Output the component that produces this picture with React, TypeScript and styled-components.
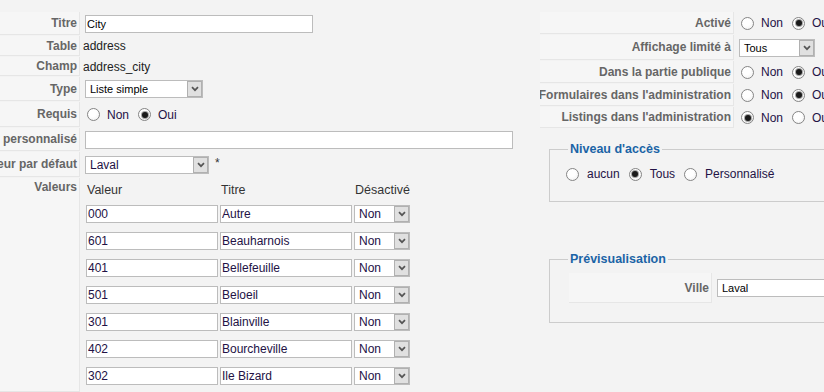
import * as React from 'react'
import styled, { createGlobalStyle } from 'styled-components'

const GlobalStyle = createGlobalStyle`
  html, body {
    margin: 0;
    padding: 0;
    background: #f3f3f3;
    overflow: hidden;
  }
  body {
    font-family: "Liberation Sans", Arial, sans-serif;
    font-size: 12px;
    color: #333;
  }
`

const Page = styled.div`
  display: flex;
  width: 824px;
  height: 392px;
  padding-top: 12px;
  box-sizing: border-box;
  overflow: hidden;
`

const LeftCol = styled.div`
  flex: 0 0 540px;
  display: flex;
  flex-direction: column;
`

const RightCol = styled.div`
  flex: 0 0 340px;
  display: flex;
  flex-direction: column;
`

const FormTable = styled.div<{ $key: number; $grow?: boolean }>`
  --key: ${p => p.$key}px;
  display: flex;
  flex-direction: column;
  gap: 1px;
  flex: ${p => (p.$grow ? '1' : 'none')};
`

const Row = styled.div<{ $h?: number; $grow?: boolean }>`
  display: grid;
  grid-template-columns: var(--key) 1fr;
  height: ${p => (p.$h ? `${p.$h}px` : 'auto')};
  flex: ${p => (p.$grow ? '1' : 'none')};
`

const Key = styled.div<{ $top?: boolean }>`
  display: flex;
  justify-content: flex-end;
  align-items: ${p => (p.$top ? 'flex-start' : 'center')};
  box-sizing: border-box;
  padding: ${p => (p.$top ? '2px' : '0')} 2px 0 0;
  overflow: hidden;
  white-space: nowrap;
  background: #f6f6f6;
  border-right: 1px solid #e6e6e6;
  border-bottom: 1px solid #e6e6e6;
  color: #666;
  font-weight: bold;
  font-size: 12px;
  line-height: 14px;
`

const Val = styled.div<{ $column?: boolean }>`
  display: flex;
  flex-direction: ${p => (p.$column ? 'column' : 'row')};
  align-items: ${p => (p.$column ? 'flex-start' : 'center')};
  gap: ${p => (p.$column ? 0 : 6)}px;
  padding: ${p => (p.$column ? '2px 0 0 6px' : '0 0 0 3px')};
  color: #222;
  font-size: 12px;
  white-space: nowrap;
  overflow: hidden;
`

const TextInput = styled.input<{ $w: number; $fs?: number; $ml?: number }>`
  box-sizing: border-box;
  width: ${p => p.$w}px;
  height: 18px;
  margin: 0 0 0 ${p => (p.$ml ?? 2)}px;
  padding: 0 1px;
  border: 1px solid #bcbcbc;
  background: #fff;
  font-family: "Liberation Sans", Arial, sans-serif;
  font-size: ${p => p.$fs ?? 11}px;
  color: ${p => (p.$fs && p.$fs > 11 ? '#231245' : '#000')};
  outline: none;
`

const SelectBox = styled.div<{ $w: number; $ml?: number }>`
  display: inline-flex;
  align-items: stretch;
  box-sizing: border-box;
  flex: none;
  width: ${p => p.$w}px;
  height: 18px;
  margin-left: ${p => (p.$ml ?? 2)}px;
  border: 1px solid #bcbcbc;
  background: #fff;
`

const SelectText = styled.span<{ $fs: number }>`
  flex: 1;
  padding-left: 4px;
  font-size: ${p => p.$fs}px;
  line-height: 16px;
  color: ${p => (p.$fs > 11 ? '#231245' : '#000')};
  overflow: hidden;
`

const SelectBtn = styled.span`
  display: flex;
  align-items: center;
  justify-content: center;
  box-sizing: border-box;
  width: 15px;
  background: #e0e0e0;
  border: 1px solid #b0b0b0;
`

const Star = styled.span`
  color: #333;
  font-size: 12px;
  margin-top: -4px;
`

const RadioGroup = styled.div<{ $gap?: number }>`
  display: flex;
  align-items: center;
  padding-left: 4px;
  gap: 9px;

  & > label {
    gap: ${p => p.$gap ?? 7}px;
  }
`

const RadioOption = styled.label`
  display: flex;
  align-items: center;
  color: #231245;
  font-size: 12px;
`

const RadioCircle = styled.span<{ $on?: boolean }>`
  display: inline-flex;
  align-items: center;
  justify-content: center;
  box-sizing: border-box;
  width: 13px;
  height: 13px;
  border-radius: 50%;
  border: 1px solid #858585;
  background: radial-gradient(circle at 40% 35%, #ffffff 40%, #ececec 100%);

  &::after {
    content: '';
    display: ${p => (p.$on ? 'block' : 'none')};
    width: 6px;
    height: 6px;
    border-radius: 50%;
    background: #1a1a1a;
    box-shadow: 0 0 0 1px #a5a5a5;
  }
`

const Cols = styled.div`
  display: grid;
  grid-template-columns: 132px 132px 56px;
  column-gap: 2px;
`

const HeadRow = styled(Cols)`
  height: 20px;
  align-items: center;
  margin-bottom: 5px;
  color: #333;
  font-size: 12.5px;

  & > span {
    padding-left: 1px;
  }
`

const ValueRows = styled(Cols)`
  row-gap: 9px;

  & ${TextInput}, & ${SelectBox} {
    margin-left: 0;
  }
`

const Fieldset = styled.fieldset<{ $mt: number; $pb: number }>`
  margin: ${p => p.$mt}px 0 0 9px;
  padding: 0 12px ${p => p.$pb}px;
  border: 1px solid #cccccc;
  min-width: 0;
`

const Legend = styled.legend`
  margin-left: 6px;
  padding: 0 2px;
  color: #1b64a6;
  font-weight: bold;
  font-size: 12.5px;
  line-height: 14px;
`

const FieldsetRadios = styled.div`
  height: 16px;
  margin-top: 10px;
  display: flex;
  align-items: center;
`

const PreviewTable = styled(FormTable)`
  margin: 7px 0 0 7px;
`

const Chevron = () => (
  <svg width="8" height="6" viewBox="0 0 8 6">
    <path d="M1 1.2 L4 4.2 L7 1.2" fill="none" stroke="#555" strokeWidth="1.7" />
  </svg>
)

type SelectProps = { w: number; value: string; fs?: number; ml?: number }

const Select: React.FC<SelectProps> = ({ w, value, fs = 11, ml }) => (
  <SelectBox $w={w} $ml={ml}>
    <SelectText $fs={fs}>{value}</SelectText>
    <SelectBtn>
      <Chevron />
    </SelectBtn>
  </SelectBox>
)

type RadiosProps = { options: string[]; checked: number; gap?: number }

const Radios: React.FC<RadiosProps> = ({ options, checked, gap }) => (
  <RadioGroup $gap={gap}>
    {options.map((o, i) => (
      <RadioOption key={o}>
        <RadioCircle $on={i === checked} />
        {o}
      </RadioOption>
    ))}
  </RadioGroup>
)

const values = [
  ['000', 'Autre'],
  ['601', 'Beauharnois'],
  ['401', 'Bellefeuille'],
  ['501', 'Beloeil'],
  ['301', 'Blainville'],
  ['402', 'Bourcheville'],
  ['302', 'Ile Bizard'],
]

export default function App() {
  return (
    <>
      <GlobalStyle />
      <Page>
        <LeftCol>
          <FormTable $key={80} $grow>
            <Row $h={23}>
              <Key>Titre</Key>
              <Val>
                <TextInput $w={228} defaultValue="City" readOnly />
              </Val>
            </Row>
            <Row $h={20}>
              <Key>Table</Key>
              <Val>address</Val>
            </Row>
            <Row $h={19}>
              <Key>Champ</Key>
              <Val>address_city</Val>
            </Row>
            <Row $h={24}>
              <Key>Type</Key>
              <Val>
                <Select w={118} value="Liste simple" />
              </Val>
            </Row>
            <Row $h={25}>
              <Key>Requis</Key>
              <Val>
                <Radios options={['Non', 'Oui']} checked={1} />
              </Val>
            </Row>
            <Row $h={23}>
              <Key>Séparateur personnalisé</Key>
              <Val>
                <TextInput $w={428} readOnly />
              </Val>
            </Row>
            <Row $h={25}>
              <Key>Valeur par défaut</Key>
              <Val>
                <Select w={124} value="Laval" fs={12} />
                <Star>*</Star>
              </Val>
            </Row>
            <Row $grow>
              <Key $top>Valeurs</Key>
              <Val $column>
                <HeadRow>
                  <span>Valeur</span>
                  <span>Titre</span>
                  <span>Désactivé</span>
                </HeadRow>
                <ValueRows>
                  {values.map(([code, title]) => (
                    <React.Fragment key={code}>
                      <TextInput $w={132} $fs={12} defaultValue={code} readOnly />
                      <TextInput $w={132} $fs={12} defaultValue={title} readOnly />
                      <Select w={56} value="Non" fs={12} ml={0} />
                    </React.Fragment>
                  ))}
                </ValueRows>
              </Val>
            </Row>
          </FormTable>
        </LeftCol>

        <RightCol>
          <FormTable $key={194}>
            <Row $h={22}>
              <Key>Activé</Key>
              <Val>
                <Radios options={['Non', 'Oui']} checked={1} />
              </Val>
            </Row>
            <Row $h={25}>
              <Key>Affichage limité à</Key>
              <Val>
                <Select w={76} value="Tous" />
              </Val>
            </Row>
            <Row $h={22}>
              <Key>Dans la partie publique</Key>
              <Val>
                <Radios options={['Non', 'Oui']} checked={1} />
              </Val>
            </Row>
            <Row $h={22}>
              <Key>Formulaires dans l'administration</Key>
              <Val>
                <Radios options={['Non', 'Oui']} checked={1} />
              </Val>
            </Row>
            <Row $h={21}>
              <Key>Listings dans l'administration</Key>
              <Val>
                <Radios options={['Non', 'Oui']} checked={0} />
              </Val>
            </Row>
          </FormTable>

          <Fieldset $mt={14} $pb={19}>
            <Legend>Niveau d'accès</Legend>
            <FieldsetRadios>
              <Radios options={['aucun', 'Tous', 'Personnalisé']} checked={1} gap={8} />
            </FieldsetRadios>
          </Fieldset>

          <Fieldset $mt={50} $pb={19}>
            <Legend>Prévisualisation</Legend>
            <PreviewTable $key={143}>
              <Row $h={30}>
                <Key>Ville</Key>
                <Val>
                  <Select w={123} value="Laval" />
                </Val>
              </Row>
            </PreviewTable>
          </Fieldset>
        </RightCol>
      </Page>
    </>
  )
}
